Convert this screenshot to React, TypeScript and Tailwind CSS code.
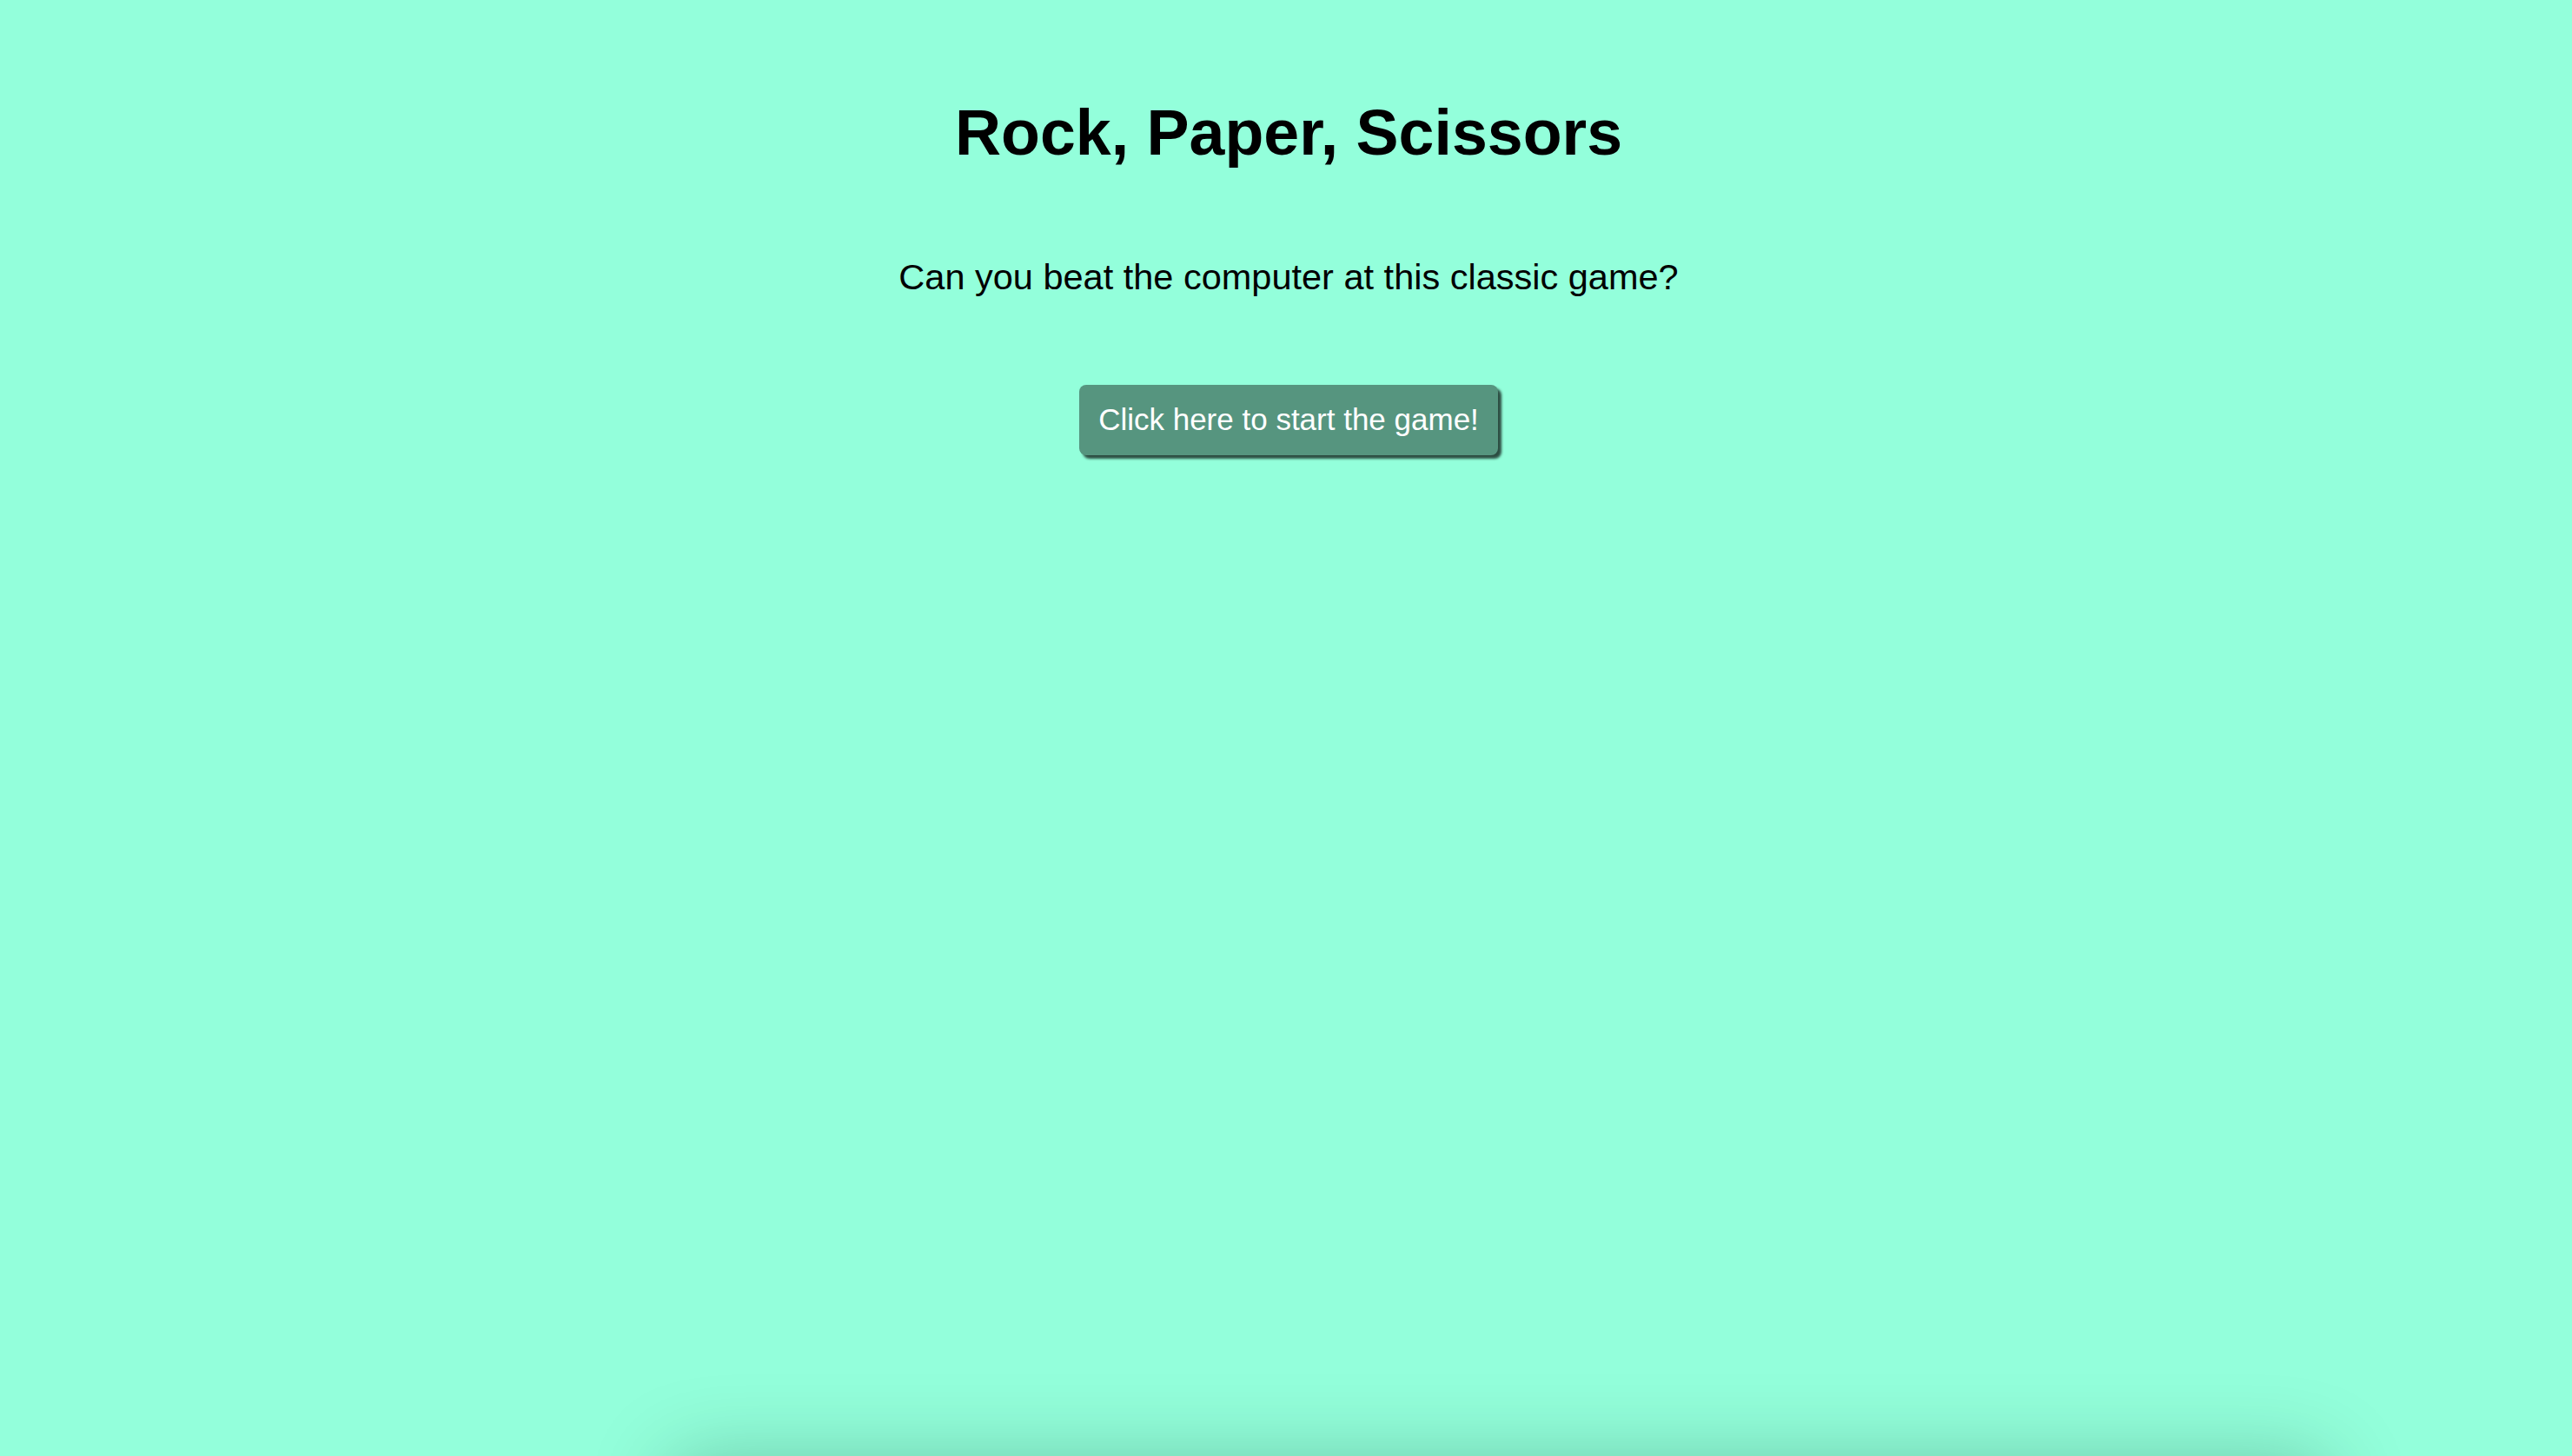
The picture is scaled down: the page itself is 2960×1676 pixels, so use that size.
import React from "react";

const App: React.FC = () => {
  return (
    <div className="relative h-screen w-full overflow-hidden bg-[#93ffdb] font-['Liberation_Sans',Arial,sans-serif] text-black">
      <div className="flex flex-col items-center pl-[6px] text-center">
        <h1 className="mt-[116px] text-[73.5px] font-bold leading-none">
          Rock, Paper, Scissors
        </h1>
        <p className="mt-[108px] text-[41.5px] leading-none">
          Can you beat the computer at this classic game?
        </p>
        <button className="mt-[104px] h-[81px] rounded-[8px] bg-[#56957f] px-[22px] pb-[3px] text-[35px] leading-none text-white shadow-[4px_4px_3px_rgba(0,0,0,0.7)]">
          Click here to start the game!
        </button>
      </div>

      {/* something just below the viewport casts a soft shadow up */}
      <div className="absolute top-full left-[770px] h-[200px] w-[1910px] rounded-[30px] shadow-[0_0_90px_rgba(0,50,30,0.25)]" />
    </div>
  );
};

export default App;
